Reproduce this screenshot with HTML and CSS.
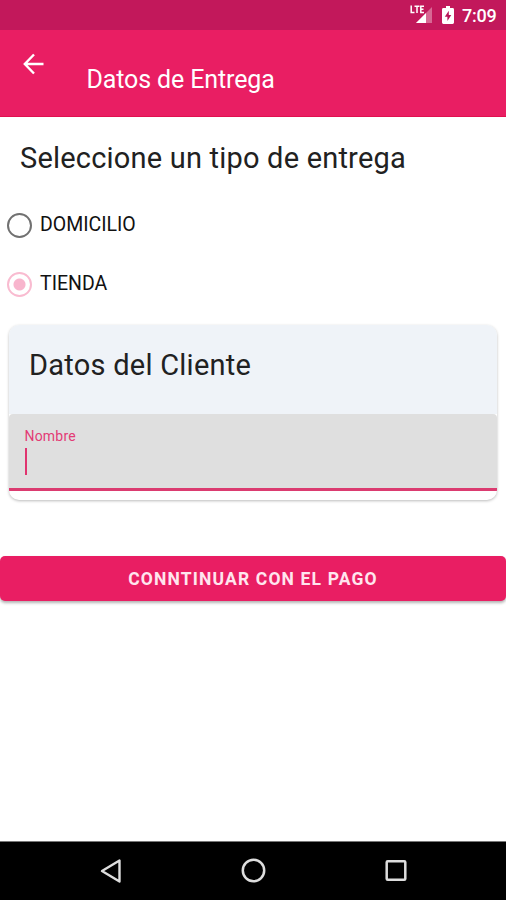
FILE: index.html
```html
<!DOCTYPE html>
<html lang="es">
<head>
<meta charset="utf-8">
<title>Datos de Entrega</title>
<link rel="stylesheet" href="styles.css">
</head>
<body>
<div class="screen">
  <div class="status">
    <svg class="signal" width="22" height="20" viewBox="0 0 22 20">
      <path d="M22 3V19H6Z" fill="#fff" opacity=".35"/>
      <path d="M16 9V19H6Z" fill="#fff"/>
      <path d="M1.2 1.5V8.500H4.500M4.500 2.200H9.500M7 2.200V9M14 2.200H10.800V8.400H14M10.800 5.200H13.500" fill="none" stroke="#fff" stroke-width="1.5"/>
    </svg>
    <svg class="battery" width="12" height="18" viewBox="0 0 12 18">
      <path d="M4 0H8V2H10.600Q12 2 12 3.400V16.600Q12 18 10.600 18H1.400Q0 18 0 16.600V3.400Q0 2 1.400 2H4Z" fill="#fff"/>
      <path d="M6.800 4.800L2.800 10.700H5.400V15L9.300 9H6.800Z" fill="#b81558"/>
    </svg>
    <span class="clock">7:09</span>
  </div>
  <header class="toolbar">
    <svg class="back" width="22" height="22" viewBox="0 0 22 22"><path d="M20.500 11H2M11 1.500L1.800 11L11 20.500" fill="none" stroke="#fff" stroke-width="2.400"/></svg>
    <h1 class="title">Datos de Entrega</h1>
  </header>
  <main class="content">
    <h2 class="heading">Seleccione un tipo de entrega</h2>
    <div class="options">
      <div class="option"><span class="radio"></span><span>DOMICILIO</span></div>
      <div class="option"><span class="radio checked"></span><span>TIENDA</span></div>
    </div>
    <section class="card">
      <h2 class="card-title">Datos del Cliente</h2>
      <div class="field">
        <div class="label">Nombre</div>
        <div class="caret"></div>
      </div>
    </section>
    <div class="button">CONNTINUAR CON EL PAGO</div>
  </main>
  <nav class="navbar">
    <svg width="24" height="26" viewBox="0 0 24 26"><path d="M20.500 2.500V23.500L3 13Z" fill="none" stroke="#ddd" stroke-width="2.400" stroke-linejoin="round"/></svg>
    <svg width="26" height="26" viewBox="0 0 26 26"><circle cx="12.500" cy="12.500" r="10.700" fill="none" stroke="#ddd" stroke-width="2.500"/></svg>
    <svg width="24" height="26" viewBox="0 0 24 26"><rect x="2.700" y="3.200" width="18.600" height="18.600" rx="1" fill="none" stroke="#ddd" stroke-width="2.500"/></svg>
  </nav>
</div>
</body>
</html>
```
FILE: styles.css
```css
* { box-sizing: border-box; }
body { margin: 0; font-family: Roboto, "Liberation Sans", sans-serif; background: #fff; }
h1, h2 { margin: 0; font-weight: 400; white-space: nowrap; }
svg { display: block; flex: none; }
.screen { width: 506px; height: 900px; display: flex; flex-direction: column; overflow: hidden; }
.status { height: 30px; flex: none; background: #c2185b; color: #fff; display: flex; align-items: flex-start; padding-left: 410px; }
.signal { margin-top: 4px; }
.battery { margin: 6px 0 0 10px; }
.clock { margin-left: 8px; margin-top: 5px; font-size: 18px; line-height: 22px; font-weight: 500; letter-spacing: -0.2px; }
.toolbar { height: 87px; flex: none; background: #e91e63; border-bottom: 1px solid #e0104f; display: flex; align-items: flex-start; padding-left: 23px; color: #fff; }
.back { margin-top: 23px; }
.title { margin: 35px 0 0 41.500px; font-size: 25px; line-height: 30px; letter-spacing: -0.120px; }
.content { flex: 1; display: flex; flex-direction: column; color: #212121; }
.heading { margin: 24px 0 0 20px; font-size: 29px; line-height: 34px; letter-spacing: 0.200px; }
.options { margin-top: 36px; font-size: 19.500px; line-height: 28px; color: #111; }
.option { display: flex; height: 59px; padding-left: 7px; }
.radio { width: 25px; height: 25px; margin: 2px 8px 0 0; border: 2px solid #717171; border-radius: 50%; flex: none; }
.checked { border-color: #f9bbd0; background: radial-gradient(circle, #f8b5cd 0 5.500px, transparent 6.500px); }
.card { width: 488px; height: 175px; margin: -4px 0 0 9px; border-radius: 10px; background: #fff; overflow: hidden; box-shadow: 0 1px 3px rgba(0,0,0,.27); }
.card-title { height: 89px; padding: 23px 0 0 20px; background: #eff3f8; font-size: 29px; line-height: 34px; letter-spacing: 0.250px; }
.field { height: 77px; border-bottom: 3px solid #db3b70; border-radius: 4px 4px 0 0; background: #dfdfdf; padding: 14px 0 0 15.500px; }
.label { font-size: 14px; line-height: 16px; color: #e33b75; letter-spacing: 0.200px; }
.caret { width: 2px; height: 27px; margin-top: 4px; background: #e0346f; }
.button { height: 45px; margin-top: 56px; border-radius: 5px; background: #e91e63; color: #ffe5ee; box-shadow: 0 2px 3px rgba(0,0,0,.3); font-size: 17.500px; font-weight: 700; line-height: 46px; text-align: center; letter-spacing: 1.150px; }
.navbar { height: 59px; flex: none; background: #000; border-top: 1px solid #777; display: flex; justify-content: space-between; align-items: center; padding: 0 98px 0 99px; }
```
